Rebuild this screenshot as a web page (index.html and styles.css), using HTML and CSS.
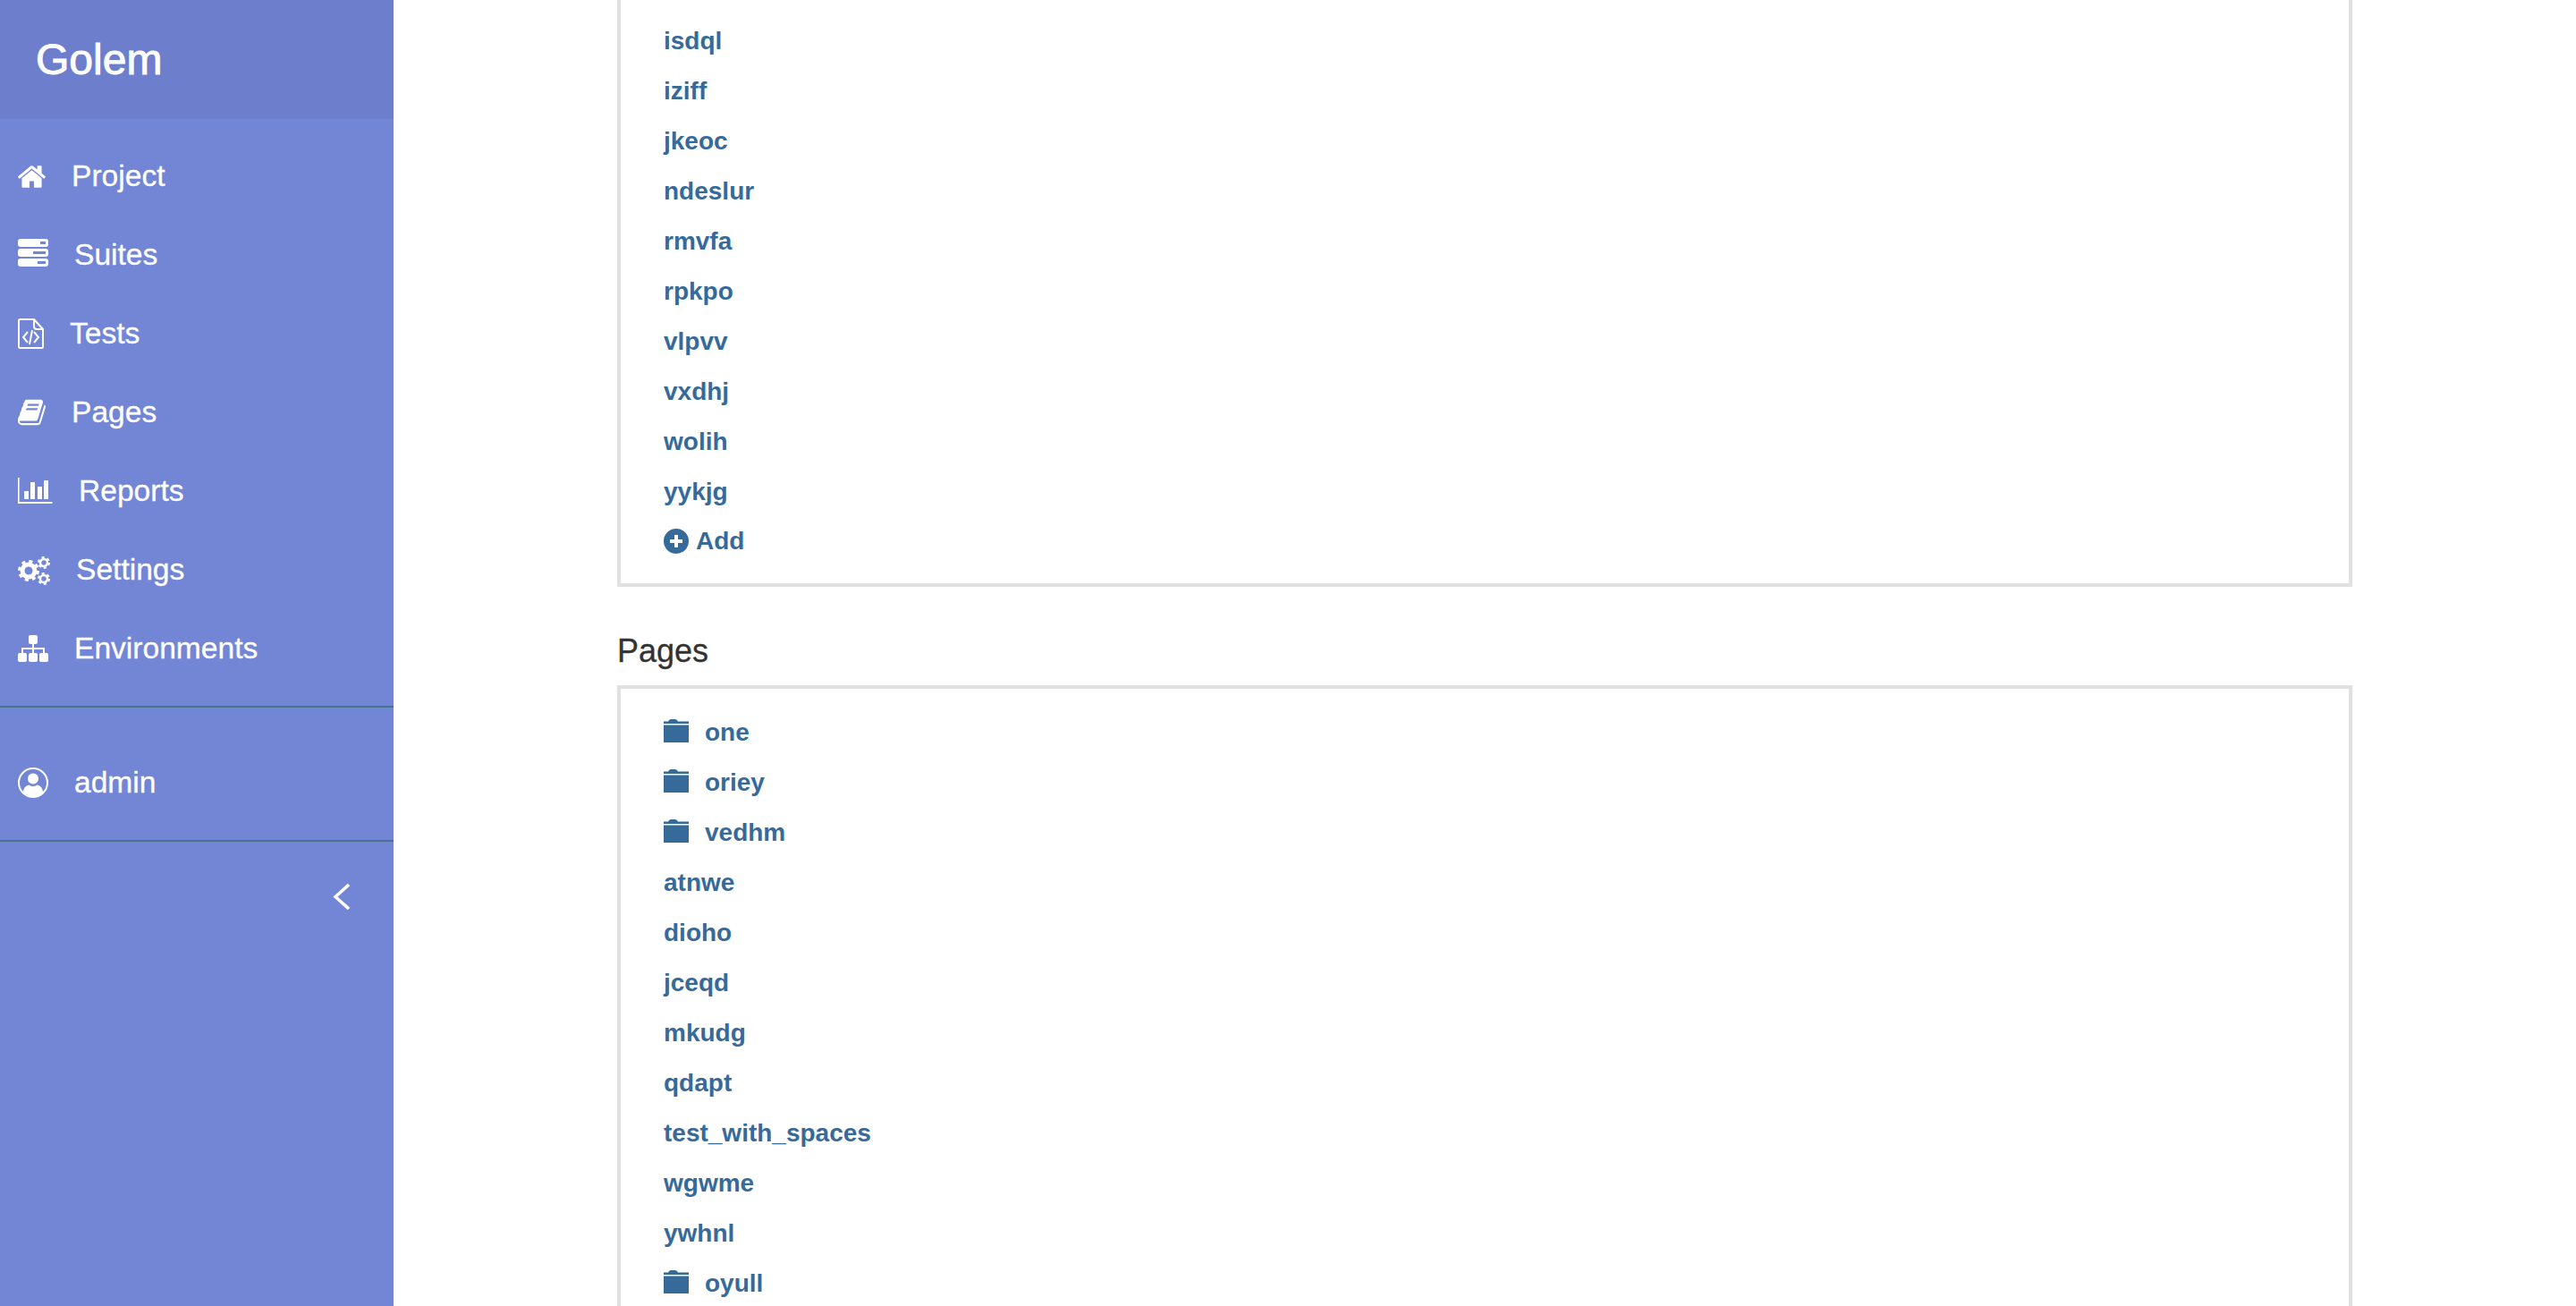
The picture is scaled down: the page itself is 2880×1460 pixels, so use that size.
FILE: index.html
```html
<!DOCTYPE html>
<html lang="en">
<head>
<meta charset="utf-8">
<title>Golem</title>
<link rel="stylesheet" href="styles.css">
</head>
<body>
<svg class="defs" width="0" height="0" aria-hidden="true">
  <symbol id="folder" viewBox="0 0 28 26">
    <path d="M0 2.5h5q1-2.5 3-2.5h5q2 0 3 2.500h12v2.500H0z"/>
    <rect y="6.500" width="28" height="19.500"/>
  </symbol>
</svg>
<div class="app">
  <aside class="sidebar">
    <header class="brand">Golem</header>
    <nav class="nav">
      <a class="nav-item">
        <svg class="icon w31" viewBox="90 250 1612 1290" height="25"><path d="M1472 992v480q0 26-19 45t-45 19h-384v-384h-256v384h-384q-26 0-45-19t-19-45v-480q0-1 .5-3t.5-3l575-474 575 474q1 2 1 6zm223-69l-62 74q-8 9-21 11h-3q-13 0-21-7l-692-577-692 577q-12 8-24 7-13-2-21-11l-62-74q-8-10-7-23.5t11-21.5l719-599q32-26 76-26t76 26l244 204v-195q0-14 9-23t23-9h192q14 0 23 9t9 23v408l219 182q10 8 11 21.5t-7 23.5z"/></svg>
        <span>Project</span>
      </a>
      <a class="nav-item">
        <svg class="icon w34 up6" viewBox="0 0 34 31" height="31">
          <rect y="0" width="34" height="9" rx="3"/><rect y="11" width="34" height="9" rx="3"/><rect y="22" width="34" height="9" rx="3"/>
          <rect class="slot" x="25" y="3" width="6" height="3"/><rect class="slot" x="17" y="14" width="14" height="3"/><rect class="slot" x="22" y="25" width="9" height="3"/>
        </svg>
        <span>Suites</span>
      </a>
      <a class="nav-item">
        <svg class="icon w29" viewBox="0 0 29 34" height="34">
          <g class="line">
            <path d="M1 2.500q0-1.500 1.500-1.500H18l10 11v20q0 1-1.500 1h-24q-1.500 0-1.500-1z"/>
            <path d="M18 1v8q0 3 3 3h7"/>
            <path d="M11 15l-5 6 5 6M18 15l5 6-5 6M16 13l-3 16"/>
          </g>
        </svg>
        <span>Tests</span>
      </a>
      <a class="nav-item">
        <svg class="icon w31" viewBox="70 128 1660 1536" height="30"><path d="M1703 478q40 57 18 129l-275 906q-19 64-76.500 107.500t-122.500 43.500h-923q-77 0-148.500-53.500t-99.500-131.500q-24-67-2-127 0-4 3-27t4-37q1-8-3-21.500t-3-19.500q2-11 8-21t16.500-23.500 16.500-23.500q23-38 45-91.500t30-91.500q3-10 .5-30t-.5-28q3-11 17-28t17-23q21-36 42-92t25-90q1-9-2.500-32t.5-28q4-13 22-30.500t22-22.500q19-26 42.500-84.500t27.500-96.500q1-8-3-25.500t-2-26.500q2-8 9-18t18-23 17-21q8-12 16.500-30.500t15-35 16-36 19.500-32 26.500-23.500 36-11.500 47.500 5.500l-1 3q38-9 51-9h761q74 0 114 56t18 130l-274 906q-36 119-71.500 153.500t-128.500 34.500h-869q-27 0-38 15-11 16-1 43 24 70 144 70h923q29 0 56-15.500t35-41.500l300-987q7-22 5-57 38 15 59 43zm-1064 2q-4 13 2 22.500t20 9.500h608q13 0 25.500-9.500t16.500-22.500l21-64q4-13-2-22.500t-20-9.500h-608q-13 0-25.500 9.500t-16.500 22.500zm-83 256q-4 13 2 22.500t20 9.500h608q13 0 25.500-9.500t16.500-22.500l21-64q4-13-2-22.500t-20-9.500h-608q-13 0-25.500 9.500t-16.500 22.500z"/></svg>
        <span>Pages</span>
      </a>
      <a class="nav-item">
        <svg class="icon w39" viewBox="0 0 39 30" height="30">
          <rect x="0" y="0" width="1.600" height="29"/><rect x="0" y="27" width="38.500" height="2"/>
          <rect x="7" y="15" width="5" height="9"/><rect x="14" y="5" width="5" height="19"/><rect x="22" y="10" width="5" height="14"/><rect x="29" y="3" width="5" height="21"/>
        </svg>
        <span>Reports</span>
      </a>
      <a class="nav-item">
        <svg class="icon w36" viewBox="0 0 36 33" height="33">
          <g class="gear">
            <circle class="big-ring" cx="12" cy="17" r="7"/><circle class="big-teeth" cx="12" cy="17" r="10.500"/>
            <circle class="small-ring" cx="29" cy="8" r="4"/><circle class="small-teeth" cx="29" cy="8" r="6"/>
            <circle class="small-ring" cx="29" cy="26" r="4"/><circle class="small-teeth" cx="29" cy="26" r="6"/>
          </g>
        </svg>
        <span>Settings</span>
      </a>
      <a class="nav-item">
        <svg class="icon w34" viewBox="0 0 34 30" height="30">
          <rect x="12" y="0" width="10" height="10" rx="2"/><rect x="0" y="20" width="10" height="10" rx="2"/><rect x="12" y="20" width="10" height="10" rx="2"/><rect x="24" y="20" width="10" height="10" rx="2"/>
          <rect x="16" y="9" width="2" height="12"/><rect x="4" y="14" width="26" height="2"/><rect x="4" y="14" width="2" height="7"/><rect x="28" y="14" width="2" height="7"/>
        </svg>
        <span>Environments</span>
      </a>
    </nav>
    <div class="user">
      <a class="nav-item">
        <svg class="icon w34" viewBox="0 0 34 34" height="34">
          <circle class="line" cx="17" cy="17" r="16"/><circle cx="17" cy="12.500" r="6"/>
          <path d="M6 28c0-6 4-8 6.500-8.500 1.500 1 3 1.500 4.500 1.500s3-.5 4.500-1.500C24 20 28 22 28 28a15.500 15.500 0 0 1-22 0z"/>
        </svg>
        <span>admin</span>
      </a>
    </div>
    <div class="collapse">
      <svg class="chevron" viewBox="0 0 19 29" width="19" height="29"><path d="M18 1L3 14.500 18 28"/></svg>
    </div>
  </aside>
  <main class="main">
    <section class="box box-cut">
      <a class="row">isdql</a><a class="row">iziff</a><a class="row">jkeoc</a><a class="row">ndeslur</a><a class="row">rmvfa</a><a class="row">rpkpo</a><a class="row">vlpvv</a><a class="row">vxdhj</a><a class="row">wolih</a><a class="row">yykjg</a>
      <a class="row row-add">
        <svg class="plus" viewBox="0 0 28 28" width="28" height="28"><circle cx="14" cy="14" r="14"/><path class="plus-mark" d="M12 7h4v5h5v4h-5v5h-4v-5H7v-4h5z"/></svg>
        <span>Add</span>
      </a>
    </section>
    <h2 class="title">Pages</h2>
    <section class="box box-open">
      <a class="row"><svg class="folder" width="28" height="26"><use href="#folder"/></svg><span>one</span></a>
      <a class="row"><svg class="folder" width="28" height="26"><use href="#folder"/></svg><span>oriey</span></a>
      <a class="row"><svg class="folder" width="28" height="26"><use href="#folder"/></svg><span>vedhm</span></a>
      <a class="row">atnwe</a><a class="row">dioho</a><a class="row">jceqd</a><a class="row">mkudg</a><a class="row">qdapt</a><a class="row">test_with_spaces</a><a class="row">wgwme</a><a class="row">ywhnl</a>
      <a class="row"><svg class="folder" width="28" height="26"><use href="#folder"/></svg><span>oyull</span></a>
    </section>
  </main>
</div>
</body>
</html>
```
FILE: styles.css
```css
html, body {
  margin: 0;
  height: 100%;
  overflow: hidden;
  background: #fff;
}
body {
  font-family: "Liberation Sans", Arial, sans-serif;
}
.defs {
  display: block;
  height: 0;
}
.app {
  display: flex;
  height: 1460px;
  overflow: hidden;
}
.sidebar {
  flex: 0 0 440px;
  background: #7386d5;
  color: #fff;
  fill: #fff;
}
.brand {
  height: 133px;
  padding-left: 40px;
  background: #6d7fcc;
  font-size: 48px;
  line-height: 133px;
  -webkit-text-stroke: 0.9px #fff;
}
.nav {
  padding: 20px 0;
  border-bottom: 2px solid #47748b;
}
.user {
  padding: 40px 0 20px;
  border-bottom: 2px solid #47748b;
}
.nav-item {
  display: flex;
  align-items: center;
  gap: 29px;
  height: 88px;
  padding-left: 20px;
  font-size: 33.6px;
  -webkit-text-stroke: 0.3px #fff;
}
.icon { flex: none; }
.w29 { width: 29px; }
.w31 { width: 31px; }
.w34 { width: 34px; }
.w36 { width: 36px; }
.w39 { width: 39px; }
.up6 { margin-top: -6px; }
.slot { fill: #7386d5; }
.line {
  fill: none;
  stroke: #fff;
  stroke-width: 2;
}
.big-ring, .small-ring, .big-teeth, .small-teeth {
  fill: none;
  stroke: #fff;
}
.big-ring { stroke-width: 5; }
.big-teeth { stroke-width: 3; stroke-dasharray: 4.100 4.150; }
.small-ring { stroke-width: 2.500; }
.small-teeth { stroke-width: 2; stroke-dasharray: 3.140 3.140; }
.collapse {
  display: flex;
  justify-content: flex-end;
  padding: 47px 49px 0 0;
}
.chevron {
  fill: none;
  stroke: #fff;
  stroke-width: 3.500;
}
.main {
  flex: 1;
  padding-left: 250px;
  padding-right: 250px;
}
.box {
  border: 4px solid #e0e0e0;
  padding-left: 48px;
}
.box-cut {
  border-top: 0;
  padding-top: 18px;
  padding-bottom: 20px;
}
.box-open {
  padding-top: 21px;
}
.title {
  margin: 52px 0 18px;
  font-size: 36px;
  font-weight: 400;
  line-height: 40px;
  color: #333;
  -webkit-text-stroke: 0.3px #333;
}
.row {
  display: flex;
  align-items: center;
  height: 56px;
  font-size: 28px;
  font-weight: 700;
  color: #366a9a;
  fill: #366a9a;
}
.row-add {
  height: 54px;
  gap: 8px;
}
.plus { flex: none; }
.plus-mark { fill: #fff; }
.folder {
  flex: none;
  margin-right: 18px;
  margin-top: -4px;
}
```
